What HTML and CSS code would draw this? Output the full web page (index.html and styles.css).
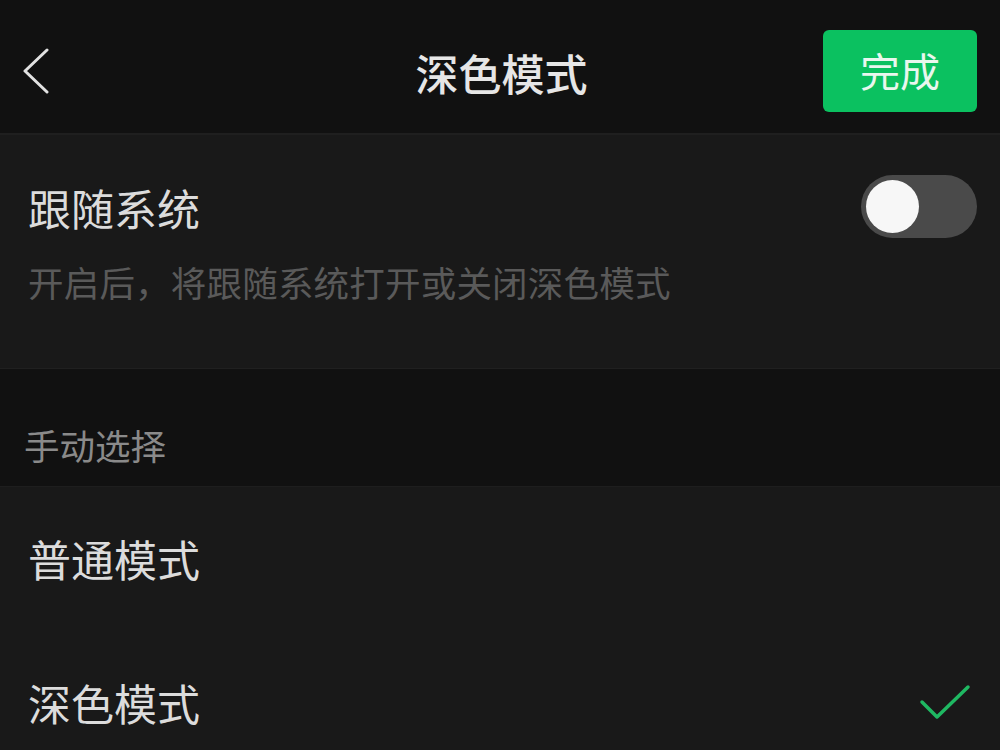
FILE: index.html
```html
<!DOCTYPE html>
<html lang="zh-CN">
<head>
<meta charset="utf-8">
<title>深色模式</title>
<link rel="stylesheet" href="styles.css">
</head>
<body>
<header class="navbar">
  <div class="nav-left">
    <svg class="back" width="26" height="46" viewBox="0 0 26 46" aria-hidden="true">
      <polyline points="24,2 2,23 24,44" fill="none" stroke="#e2e2e2" stroke-width="3" stroke-linecap="round" stroke-linejoin="round"/>
    </svg>
  </div>
  <h1 class="nav-title">深色模式</h1>
  <div class="nav-right">
    <button class="done-btn">完成</button>
  </div>
</header>

<section class="card follow">
  <div class="follow-row">
    <span class="item-title follow-title">跟随系统</span>
    <span class="switch"><span class="knob"></span></span>
  </div>
  <p class="follow-desc">开启后，将跟随系统打开或关闭深色模式</p>
</section>

<div class="section-label">手动选择</div>

<section class="list">
  <div class="list-row">
    <span class="item-title">普通模式</span>
  </div>
  <div class="list-row">
    <span class="item-title">深色模式</span>
    <svg class="check" width="52" height="38" viewBox="0 0 52 38" aria-hidden="true">
      <polyline points="3,18 18,33 49,3" fill="none" stroke="#1fb862" stroke-width="3.5" stroke-linecap="round" stroke-linejoin="round"/>
    </svg>
  </div>
</section>
</body>
</html>
```

FILE: styles.css
```css
* {
  box-sizing: border-box;
}

html, body {
  margin: 0;
  padding: 0;
}

body {
  background: #191919;
  font-family: "Noto Sans CJK SC", "Noto Sans", "Liberation Sans", sans-serif;
  color: #dadada;
  width: 1000px;
  height: 750px;
  overflow: hidden;
}

.navbar {
  height: 133px;
  background: #111111;
  padding-top: 9px;
  display: grid;
  grid-template-columns: 1fr auto 1fr;
  align-items: center;
}

.nav-left {
  display: flex;
  align-items: center;
  padding-left: 23px;
}

.back {
  display: block;
}

.nav-title {
  margin: 0;
  font-size: 43px;
  line-height: 1;
  font-weight: 500;
  color: #e6e6e6;
  padding-top: 2px;
  padding-left: 3px;
}

.nav-right {
  display: flex;
  justify-content: flex-end;
  padding-right: 23px;
}

.done-btn {
  width: 154px;
  height: 82px;
  border: none;
  border-radius: 6px;
  background: #0bc160;
  color: #e9f7ee;
  font-family: inherit;
  font-size: 40px;
  line-height: 1;
  padding: 0 0 2px 0;
}

.card {
  background: #191919;
}

.follow {
  border-top: 2px solid #1f1f1f;
  border-bottom: 1px solid #202020;
  padding: 40px 23px 68px 28px;
}

.follow-row {
  display: flex;
  align-items: center;
  justify-content: space-between;
  height: 63px;
}

.item-title {
  font-size: 43px;
  line-height: 1;
  color: #dcdcdc;
}

.follow-title {
  padding-top: 2px;
}

.switch {
  width: 116px;
  height: 63px;
  border-radius: 32px;
  background: #4a4a4a;
  padding: 5px;
  display: flex;
  align-items: center;
}

.knob {
  width: 53px;
  height: 53px;
  border-radius: 50%;
  background: #f7f7f7;
}

.follow-desc {
  margin: 26px 0 0 0;
  font-size: 35.5px;
  line-height: 1;
  color: #5a5a5a;
  letter-spacing: 0.2px;
}

.section-label {
  background: #111111;
  height: 118px;
  padding: 58px 0 0 24px;
  font-size: 35.5px;
  line-height: 1;
  color: #8a8a8a;
  border-bottom: 1px solid #1e1e1e;
}

.list-row {
  height: 144px;
  display: flex;
  align-items: center;
  justify-content: space-between;
  padding: 0 29px 0 28px;
}

.check {
  display: block;
}
```
